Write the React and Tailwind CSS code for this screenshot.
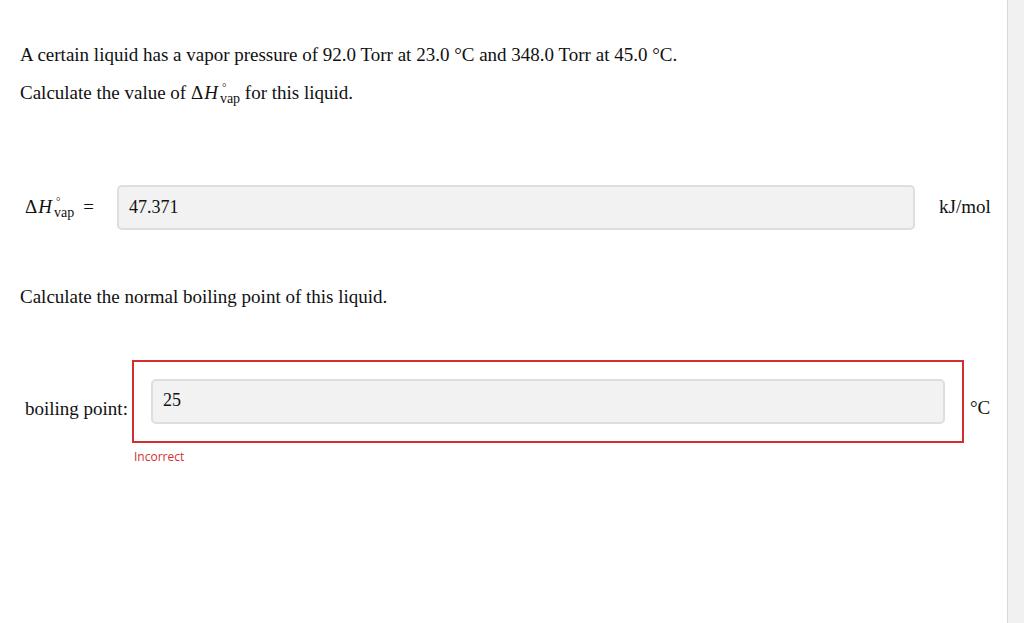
function DeltaH({ size = 'text-[19px]' }) {
  return (
    <span className={`inline-flex items-baseline whitespace-nowrap ${size}`}>
      <span>Δ</span>
      <span className="italic ml-[1px]">H</span>
      <span className="relative inline-block ml-[2px] text-[14px] leading-none translate-y-[4px]">
        <span className="absolute left-[2px] -top-[10px] text-[11px] leading-[10px]">°</span>
        vap
      </span>
    </span>
  )
}

export default function App() {
  return (
    <div className="flex h-[623px] w-[1024px] bg-white text-[19px] text-[#111] font-['Liberation_Serif','Times_New_Roman',serif]">
      <main className="flex-1 pl-5 pr-4">
        <p className="mt-[43px] leading-6">
          A certain liquid has a vapor pressure of 92.0 Torr at 23.0 °C and 348.0 Torr at 45.0 °C.
        </p>
        <p className="mt-[14px] leading-6">
          Calculate the value of <DeltaH /> for this liquid.
        </p>

        <div className="mt-[80px] flex items-center">
          <div className="w-[97px] pl-[5px] flex items-center gap-[9px]">
            <DeltaH />
            <span>=</span>
          </div>
          <div className="w-[798px] h-[45px] rounded-[5px] border-2 border-[#dedede] bg-[#f2f2f2] flex items-center pl-[10px] text-[18px]">
            47.371
          </div>
          <div className="self-start pt-[8px] pl-[24px]">kJ/mol</div>
        </div>

        <p className="mt-[55px] leading-6">Calculate the normal boiling point of this liquid.</p>

        <div className="mt-[51px] flex items-center">
          <div className="w-[112px] pl-[5px] pt-[16px] whitespace-nowrap">boiling point:</div>
          <div className="w-[832px] h-[83px] border-2 border-[#d32f2f] px-[17px] py-[17px]">
            <div className="w-[794px] h-[45px] rounded-[5px] border-2 border-[#dedede] bg-[#f2f2f2] pl-[10px] pt-[9px] text-[18px] leading-5">
              25
            </div>
          </div>
          <div className="pl-[6px] pt-[14px] whitespace-nowrap">°C</div>
        </div>
        <div className="ml-[114px] mt-[5px] text-[12px] font-medium text-[#d32f2f] font-['Open_Sans',sans-serif]">Incorrect</div>
      </main>
      <aside className="w-[19px] h-full border-l border-[#d9d9d9] bg-[#f1f1f1]" />
    </div>
  )
}
